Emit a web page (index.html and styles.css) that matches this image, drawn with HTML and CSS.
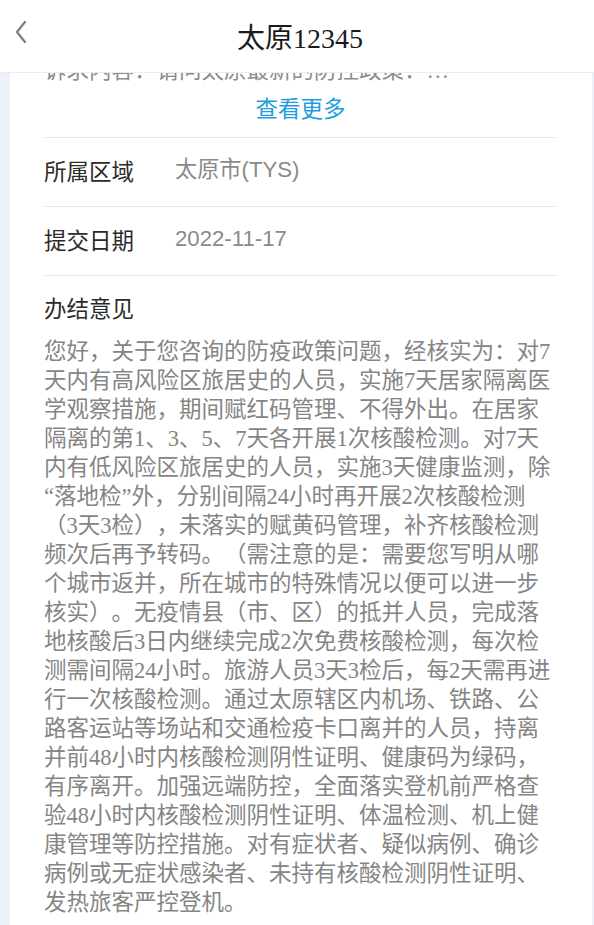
FILE: index.html
```html
<!DOCTYPE html>
<html lang="zh-CN">
<head>
  <meta charset="UTF-8">
  <meta name="viewport" content="width=device-width, initial-scale=1.0">
  <title>太原12345</title>
  <link rel="stylesheet" href="styles.css">
</head>
<body>
  <header class="top-bar">
    <a class="back-btn" href="#">
      <svg width="14" height="24" viewBox="0 0 14 24">
        <polyline points="11,2 3,12 11,22" fill="none" stroke="#808080" stroke-width="2.2" stroke-linecap="round" stroke-linejoin="round"/>
      </svg>
    </a>
    <h1 class="top-title">太原12345</h1>
  </header>

  <div class="page">
    <div class="detail-card">
      <div class="summary">
        <p class="summary-text">诉求内容：请问太原最新的防控政策：…</p>
        <a class="more-link" href="#">查看更多</a>
      </div>

      <div class="info-row">
        <span class="info-label">所属区域</span>
        <span class="info-value">太原市(TYS)</span>
      </div>
      <div class="info-row">
        <span class="info-label">提交日期</span>
        <span class="info-value">2022-11-17</span>
      </div>

      <div class="reply">
        <h2 class="info-label">办结意见</h2>
        <p class="reply-text">您好，关于您咨询的防疫政策问题，经核实为：对7天内有高风险区旅居史的人员，实施7天居家隔离医学观察措施，期间赋红码管理、不得外出。在居家隔离的第1、3、5、7天各开展1次核酸检测。对7天内有低风险区旅居史的人员，实施3天健康监测，除“落地检”外，分别间隔24小时再开展2次核酸检测（3天3检），未落实的赋黄码管理，补齐核酸检测频次后再予转码。（需注意的是：需要您写明从哪个城市返并，所在城市的特殊情况以便可以进一步核实）。无疫情县（市、区）的抵并人员，完成落地核酸后3日内继续完成2次免费核酸检测，每次检测需间隔24小时。旅游人员3天3检后，每2天需再进行一次核酸检测。通过太原辖区内机场、铁路、公路客运站等场站和交通检疫卡口离并的人员，持离并前48小时内核酸检测阴性证明、健康码为绿码，有序离开。加强远端防控，全面落实登机前严格查验48小时内核酸检测阴性证明、体温检测、机上健康管理等防控措施。对有症状者、疑似病例、确诊病例或无症状感染者、未持有核酸检测阴性证明、发热旅客严控登机。</p>
      </div>
    </div>
  </div>
</body>
</html>
```

FILE: styles.css
```css
/* styles.css */
body {
  margin: 0;
  padding: 0;
  font-family: "Liberation Serif", "Noto Sans CJK SC", serif;
  background-color: #ecf1fa;
  text-spacing-trim: space-all;
}

.top-bar {
  position: fixed;
  top: 0;
  left: 0;
  right: 0;
  height: 72px;
  background: #fff;
  border-bottom: 1px solid #ececec;
  display: flex;
  align-items: center;
  justify-content: center;
  z-index: 10;
}

.back-btn {
  position: absolute;
  left: 14px;
  top: 20px;
  display: block;
  line-height: 0;
}

.top-title {
  margin: 0;
  font-size: 28px;
  font-weight: normal;
  color: #1a1a1a;
  padding-left: 6px;
}

.page {
  padding: 0 2px 0 10px;
  min-height: 100vh;
}

.detail-card {
  background: #fff;
  padding: 0 35px 30px 34px;
}

.summary {
  padding-top: 56px;
  padding-bottom: 15px;
  border-bottom: 1px solid #e9e9e9;
  text-align: center;
}

.summary-text {
  margin: 0;
  font-size: 22.5px;
  line-height: 29px;
  color: #8c8c8c;
  text-align: left;
  white-space: nowrap;
  overflow: hidden;
}

.more-link {
  display: block;
  margin-top: 8px;
  font-size: 22.5px;
  line-height: 29px;
  color: #1e9ce0;
  text-decoration: none;
  font-family: "Noto Sans CJK SC", sans-serif;
}

.info-row {
  display: flex;
  align-items: center;
  padding: 16px 0 20px;
  border-bottom: 1px solid #e9e9e9;
  line-height: 32px;
}

.info-label {
  width: 131px;
  flex-shrink: 0;
  margin: 0;
  font-family: "Noto Sans CJK SC", sans-serif;
  font-size: 22.5px;
  font-weight: normal;
  color: #2b2b2b;
  line-height: 32px;
}

.info-value {
  font-family: "Liberation Sans", "Noto Sans CJK SC", sans-serif;
  font-size: 22.2px;
  color: #8a8a8a;
}

.reply {
  padding-top: 15px;
}

.reply-text {
  margin: 14px 0 0;
  font-size: 22.5px;
  line-height: 29px;
  color: #858585;
}
```
